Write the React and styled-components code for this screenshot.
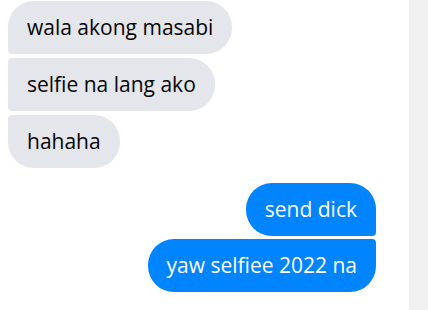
import React from "react";
import styled, { createGlobalStyle } from "styled-components";

const GlobalStyle = createGlobalStyle`
  html, body {
    margin: 0;
    padding: 0;
    background: #fff;
  }
  body {
    font-family: "Open Sans", "Noto Sans", sans-serif;
  }
`;

const Page = styled.div`
  display: flex;
  width: 428px;
  height: 310px;
  overflow: hidden;
`;

const Thread = styled.div`
  flex: 1;
  display: flex;
  flex-direction: column;
  gap: 15px;
  padding: 1px 33px 0 8px;
`;

const Group = styled.div`
  display: flex;
  flex-direction: column;
  align-items: ${(p) => (p.$mine ? "flex-end" : "flex-start")};
  gap: ${(p) => (p.$mine ? "3px" : "4px")};
`;

const Bubble = styled.div`
  box-sizing: border-box;
  height: 53px;
  display: flex;
  align-items: center;
  padding: 0 19px 2px;
  font-size: 21px;
  background: ${(p) => (p.$mine ? "#0084ff" : "#e4e6eb")};
  color: ${(p) => (p.$mine ? "#ffffff" : "#050505")};
  border-radius: ${(p) => p.$radius};
`;

const Scrollbar = styled.div`
  width: 19px;
  background: #f0f0f0;
`;

const theirs = ["wala akong masabi", "selfie na lang ako", "hahaha"];
const mine = ["send dick", "yaw selfiee 2022 na"];

// corner radius depends on position inside a group
const radiusFor = (i, n, isMine) => {
  const big = "26px";
  const small = "4px";
  const top = i === 0 ? big : small;
  const bottom = i === n - 1 ? big : small;
  return isMine
    ? `${big} ${top} ${bottom} ${big}`
    : `${top} ${big} ${big} ${bottom}`;
};

export default function App() {
  return (
    <Page>
      <GlobalStyle />
      <Thread>
        <Group>
          {theirs.map((t, i) => (
            <Bubble key={t} $radius={radiusFor(i, theirs.length, false)}>
              {t}
            </Bubble>
          ))}
        </Group>
        <Group $mine>
          {mine.map((t, i) => (
            <Bubble key={t} $mine $radius={radiusFor(i, mine.length, true)}>
              {t}
            </Bubble>
          ))}
        </Group>
      </Thread>
      <Scrollbar />
    </Page>
  );
}
